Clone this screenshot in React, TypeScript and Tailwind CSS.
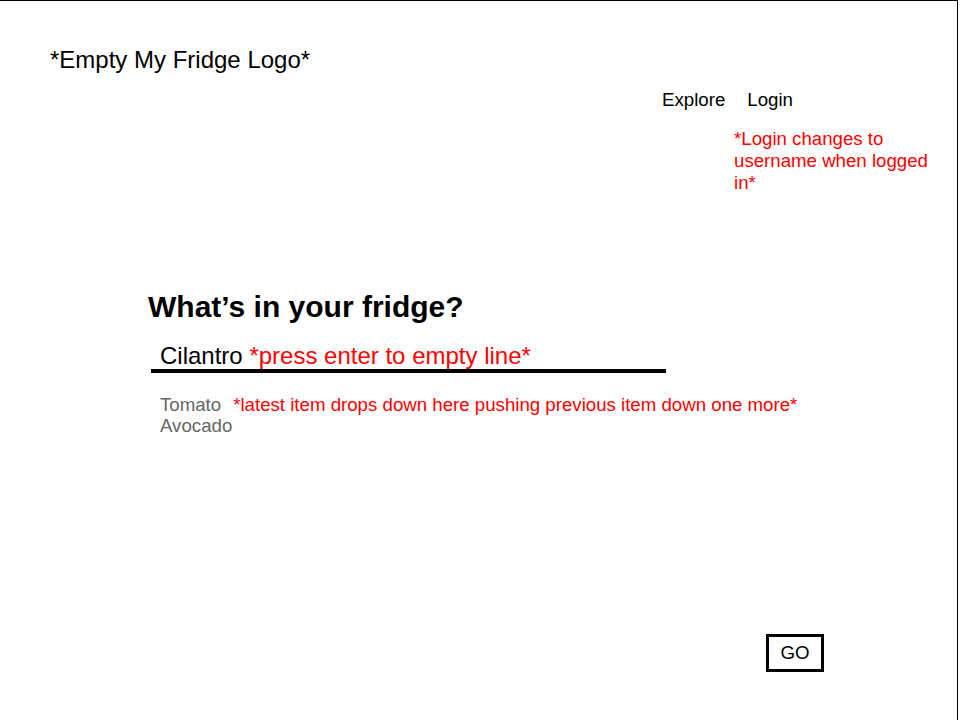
export default function App() {
  return (
    <div className="w-[960px] h-[720px] bg-white font-['Liberation_Sans',Arial,sans-serif] text-black">
      <div className="flex h-[720px] w-[958px] flex-col border-t border-r border-black">
        {/* Logo */}
        <div className="ml-[50px] mt-[47px] text-[24px] leading-none">*Empty My Fridge Logo*</div>

        {/* Nav */}
        <nav className="ml-[662px] mt-[19px] flex gap-[22px] text-[18.67px] leading-none">
          <span>Explore</span>
          <span>Login</span>
        </nav>
        <p className="ml-[734px] mt-[18px] w-[210px] text-[18.67px] leading-[22px] text-[#ff0000]">
          *Login changes to username when logged in*
        </p>

        {/* Fridge input */}
        <h1 className="ml-[148px] mt-[98px] text-[30px] font-bold leading-none">What’s in your fridge?</h1>
        <div className="ml-[160px] mt-[22px] text-[24px] leading-none">
          Cilantro <span className="text-[#ff0000]">*press enter to empty line*</span>
        </div>
        <div className="ml-[151px] mt-[1px] h-[4px] w-[515px] bg-black" />

        {/* Items */}
        <ul className="ml-[160px] mt-[21px] text-[18.67px] leading-[21.5px] text-[#666666]">
          <li>
            Tomato
            <span className="ml-[12px] text-[#ff0000]">
              *latest item drops down here pushing previous item down one more*
            </span>
          </li>
          <li>Avocado</li>
        </ul>

        <button className="mt-auto mb-[48px] ml-[766px] flex h-[38px] w-[58px] items-center justify-center border-[3px] border-black text-[18.67px] leading-none">
          GO
        </button>
      </div>
    </div>
  );
}
